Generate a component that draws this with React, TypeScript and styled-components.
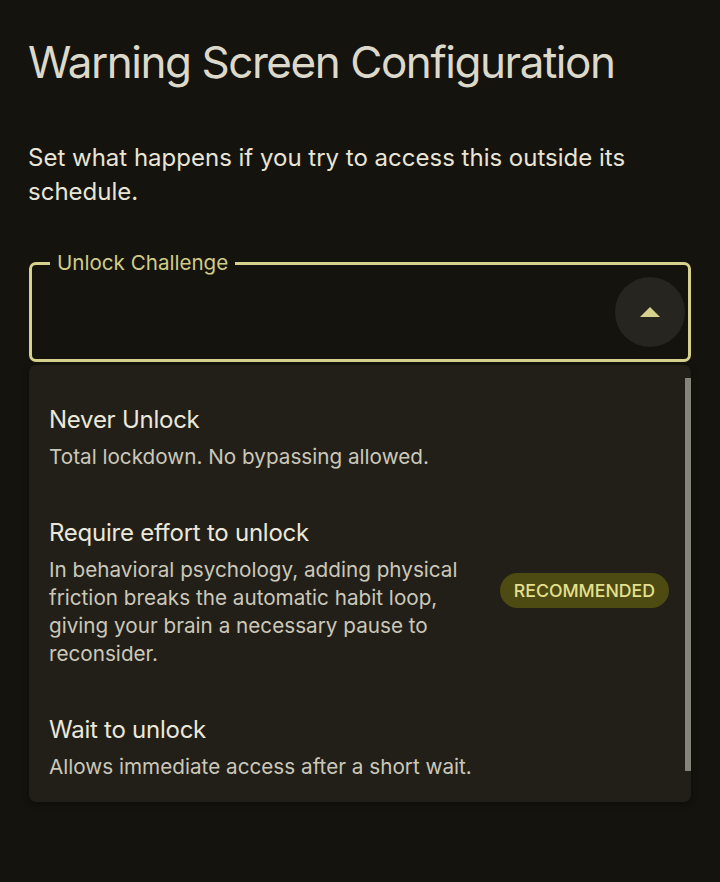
import React from 'react';
import styled, {createGlobalStyle} from "styled-components";

const GlobalStyle = createGlobalStyle`
    html, body {
        margin: 0;
        padding: 0;
        background: #15130d;
    }
    body {
        font-family: Inter, Roboto, "Liberation Sans", sans-serif;
        -webkit-font-smoothing: antialiased;
    }
`;

interface Option {
    title: string,
    description: string,
    badge?: string,
}

const options: Option[] = [
    {
        title: "Never Unlock",
        description: "Total lockdown. No bypassing allowed.",
    },
    {
        title: "Require effort to unlock",
        description: "In behavioral psychology, adding physical friction breaks the automatic habit loop, giving your brain a necessary pause to reconsider.",
        badge: "RECOMMENDED",
    },
    {
        title: "Wait to unlock",
        description: "Allows immediate access after a short wait.",
    },
];

function App() {
    return (
        <Page>
            <GlobalStyle/>
            <Title>Warning Screen Configuration</Title>
            <Subtitle>Set what happens if you try to access this outside its schedule.</Subtitle>

            <Field>
                <FieldLabel>Unlock Challenge</FieldLabel>
                <ToggleButton aria-label="Collapse">
                    <svg width="20" height="10" viewBox="0 0 20 10">
                        <path d="M0 10 L10 0 L20 10 Z" fill="#d6d28e"/>
                    </svg>
                </ToggleButton>
            </Field>

            <Menu>
                <MenuList>
                    {options.map((o) => (
                        <MenuItem key={o.title}>
                            <ItemText>
                                <ItemTitle>{o.title}</ItemTitle>
                                <ItemDescription>{o.description}</ItemDescription>
                            </ItemText>
                            {o.badge && <Badge>{o.badge}</Badge>}
                        </MenuItem>
                    ))}
                </MenuList>
                <ScrollThumb/>
            </Menu>
        </Page>
    );
}

const Page = styled.div`
    padding: 34px 29px 40px 28px;
    display: flex;
    flex-direction: column;
`;

const Title = styled.h1`
    margin: 0;
    font-size: 44px;
    font-weight: 400;
    line-height: 56px;
    color: #dcd9ca;
    letter-spacing: -1.45px;
`;

const Subtitle = styled.p`
    margin: 51px 0 0;
    font-size: 24px;
    line-height: 34px;
    color: #e8e5d6;
    letter-spacing: 0;
`;

const Field = styled.div`
    position: relative;
    margin: 53px 0 0 1px;
    height: 94px;
    border: 3px solid #d6d28e;
    border-radius: 7px;
    display: flex;
    align-items: center;
    justify-content: flex-end;
    padding-right: 3px;
`;

const FieldLabel = styled.span`
    position: absolute;
    top: -15px;
    left: 18px;
    padding: 0 7px;
    background: #15130d;
    font-size: 20.6px;
    line-height: 26px;
    color: #d0cc88;
`;

const ToggleButton = styled.button`
    width: 70px;
    height: 70px;
    border: none;
    border-radius: 50%;
    background: #27251f;
    display: flex;
    align-items: center;
    justify-content: center;
    padding: 0;
    cursor: pointer;
`;

const Menu = styled.div`
    position: relative;
    margin: 3px 0 0 1px;
    height: 437px;
    overflow: hidden;
    background: #221f19;
    border-radius: 7px;
    box-shadow: 0 2px 6px rgba(0, 0, 0, 0.35);
`;

const MenuList = styled.ul`
    list-style: none;
    margin: 0;
    padding: 16px 0 0;
`;

const MenuItem = styled.li`
    display: flex;
    align-items: center;
    gap: 16px;
    padding: 24px 22px 23px 20px;
`;

const ItemText = styled.div`
    flex: 1;
    display: flex;
    flex-direction: column;
    gap: 8px;
`;

const ItemTitle = styled.span`
    font-size: 24px;
    line-height: 30px;
    color: #ebe8da;
    letter-spacing: -0.25px;
`;

const ItemDescription = styled.span`
    font-size: 20.7px;
    line-height: 28px;
    color: #cbc8b9;
`;

const Badge = styled.span`
    margin-top: -5px;
    padding: 0 14px;
    height: 35px;
    display: flex;
    align-items: center;
    border-radius: 18px;
    background: #4d4b12;
    color: #e4e08f;
    font-size: 17.7px;
    font-weight: 500;
    white-space: nowrap;
`;

const ScrollThumb = styled.div`
    position: absolute;
    top: 13px;
    right: 0;
    width: 6px;
    height: 393px;
    background: #86847a;
`;

export default App;
